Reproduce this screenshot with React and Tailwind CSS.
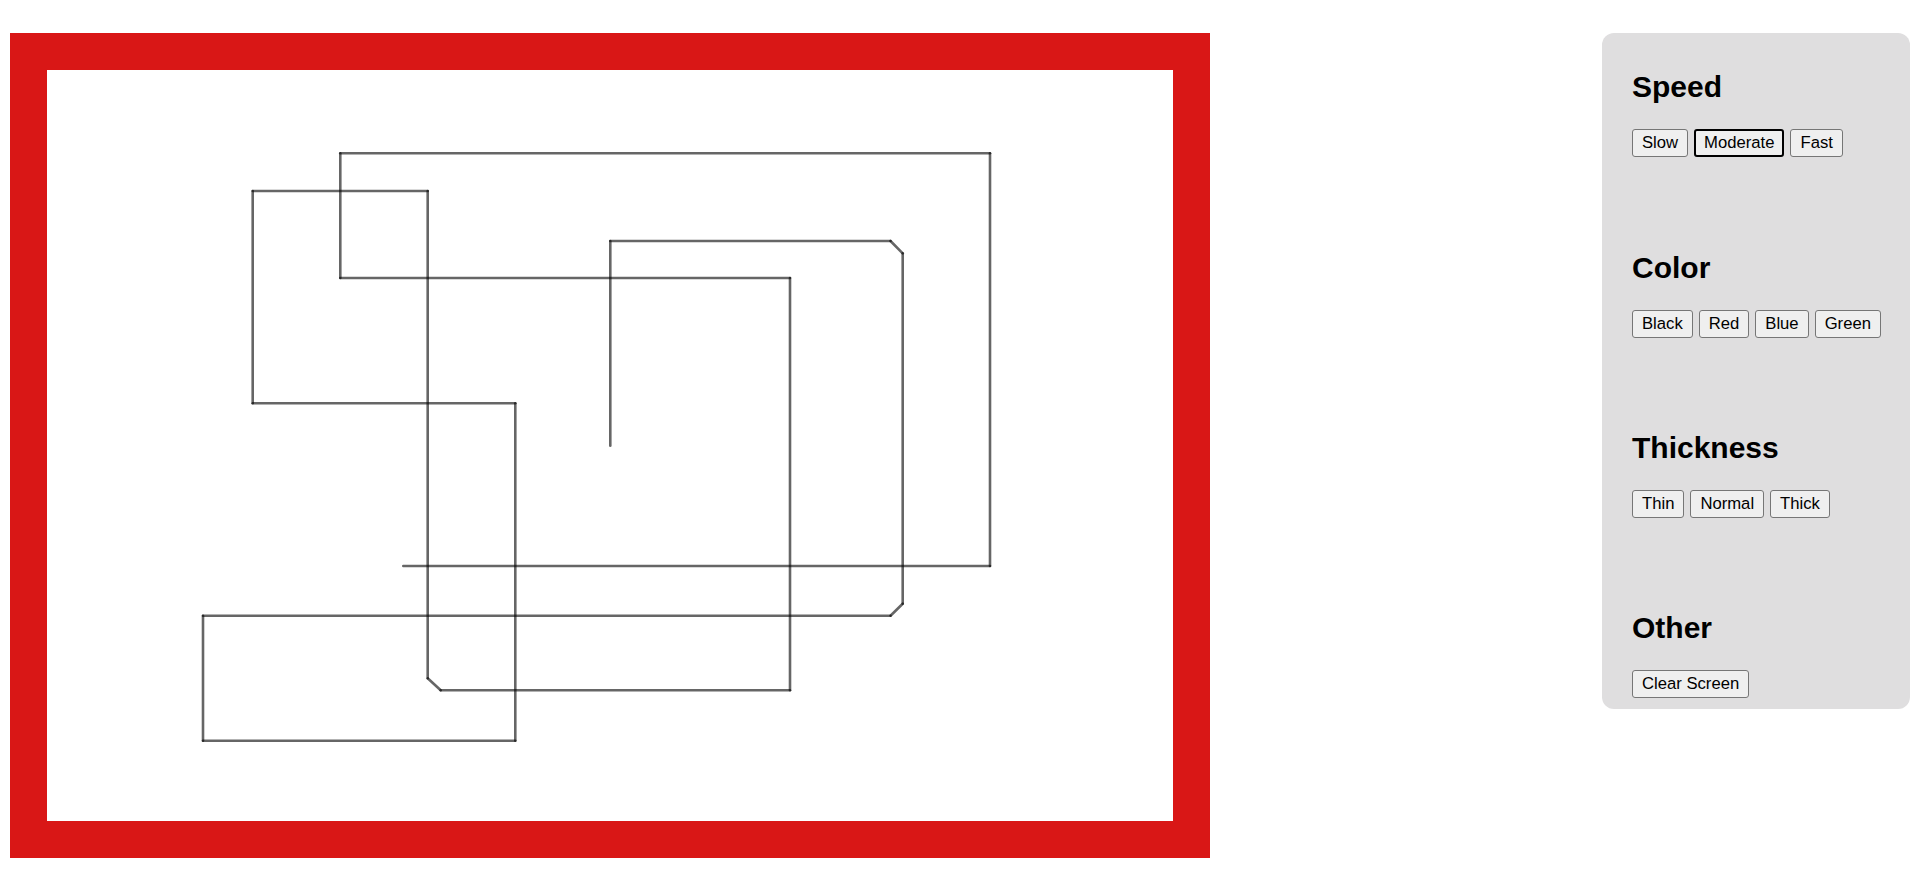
import React from "react";

const points = [
  [563.3, 375.7],
  [563.3, 171],
  [843.5, 171],
  [855.7, 183.3],
  [855.7, 533.7],
  [843.5, 545.7],
  [156, 545.7],
  [156, 670.7],
  [468.3, 670.7],
  [468.3, 333.3],
  [205.7, 333.3],
  [205.7, 121],
  [380.7, 121],
  [380.7, 608.3],
  [393.7, 620.3],
  [743, 620.3],
  [743, 208],
  [293.3, 208],
  [293.3, 83.3],
  [943, 83.3],
  [943, 496],
  [356.3, 496],
];

const sections = [
  { title: "Speed", buttons: ["Slow", "Moderate", "Fast"], active: "Moderate" },
  { title: "Color", buttons: ["Black", "Red", "Blue", "Green"] },
  { title: "Thickness", buttons: ["Thin", "Normal", "Thick"] },
  { title: "Other", buttons: ["Clear Screen"] },
];

function Canvas() {
  return (
    <div className="w-[1200px] h-[825px] border-[37px] border-[#d91716] bg-white shrink-0">
      <svg width="1126" height="751" viewBox="0 0 1126 751" className="block">
        {points.slice(1).map((p, i) => {
          const prev = points[i];
          return (
            <line
              key={i}
              x1={prev[0]}
              y1={prev[1]}
              x2={p[0]}
              y2={p[1]}
              stroke="black"
              strokeOpacity="0.6"
              strokeWidth="2.6"
              strokeLinecap="round"
            />
          );
        })}
      </svg>
    </div>
  );
}

function Panel() {
  return (
    <div className="w-[308px] h-[676px] bg-[#dfdedf] rounded-[12px] pt-[37px] pl-[30px] flex flex-col gap-[92px]">
      {sections.map((s, i) => (
        <div key={s.title} className={i === 0 ? "pb-[1px]" : ""}>
          <h2 className="text-[30px] leading-[34px] font-bold text-black">{s.title}</h2>
          <div className="mt-[25px] mb-[1px] flex gap-[6px]">
            {s.buttons.map((b) => (
              <button
                key={b}
                className={
                  b === s.active
                    ? "h-[28px] px-[8px] text-[16.67px] leading-[20px] bg-[#efefef] border-2 border-black rounded-[3px] text-black"
                    : "h-[28px] px-[9px] text-[16.67px] leading-[20px] bg-[#efefef] border border-[#767676] rounded-[3px] text-black"
                }
              >
                {b}
              </button>
            ))}
          </div>
        </div>
      ))}
    </div>
  );
}

export default function App() {
  return (
    <div
      className="w-[1920px] h-[896px] bg-white flex justify-between items-start px-[10px] pt-[33px]"
      style={{ fontFamily: '"Liberation Sans", Arial, sans-serif' }}
    >
      <Canvas />
      <Panel />
    </div>
  );
}
